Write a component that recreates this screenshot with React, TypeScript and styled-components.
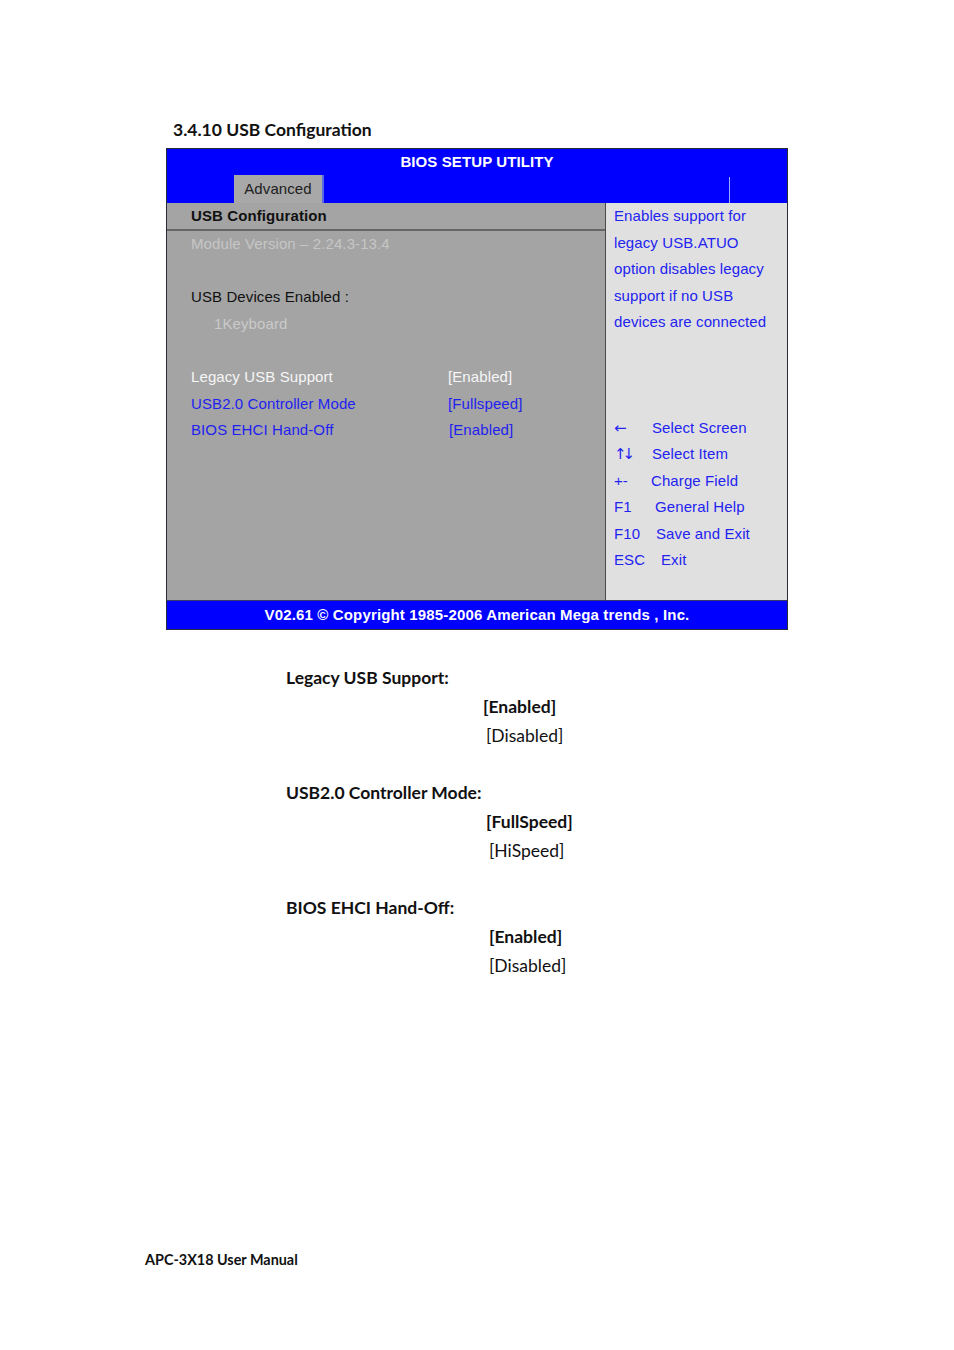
import React from "react";
import styled, { createGlobalStyle } from "styled-components";

const GlobalStyle = createGlobalStyle`
  body {
    margin: 0;
    background: #ffffff;
  }
`;

const Page = styled.div`
  width: 954px;
  height: 1350px;
  box-sizing: border-box;
  padding-top: 119px;
  font-family: Lato, "Open Sans", sans-serif;
  color: #111;
  display: flex;
  flex-direction: column;
`;

const SectionTitle = styled.h3`
  margin: 0 0 8px 173px;
  font-size: 17.5px;
  line-height: 21px;
  font-weight: 700;
`;

const Bios = styled.div`
  margin-left: 166px;
  width: 622px;
  box-sizing: border-box;
  border: 1px solid #2a2a3a;
  font-family: "Liberation Sans", Arial, sans-serif;
  font-size: 15px;
  letter-spacing: 0.1px;
`;

const Header = styled.div`
  background: #0000ff;
  height: 54px;
  display: flex;
  flex-direction: column;
`;

const HeaderTitle = styled.div`
  height: 26px;
  line-height: 26px;
  text-align: center;
  color: #ffffff;
  font-weight: 700;
  font-size: 15px;
  letter-spacing: 0.1px;
`;

const TabRow = styled.div`
  height: 28px;
  display: flex;
  align-items: stretch;
  padding-left: 67px;
`;

const Tab = styled.div`
  width: 88px;
  background: #a8a8a8;
  color: #202020;
  text-align: center;
  line-height: 28px;
  border-right: 2px solid #5a6ae0;
`;

const TabSpacer = styled.div`
  width: 405px;
`;

const TabDivider = styled.div`
  width: 1px;
  background: #9fa8ff;
  margin-top: 2px;
`;

const Body = styled.div`
  display: grid;
  grid-template-columns: 438px 1px 1fr;
  height: 397px;
`;

const LeftPanel = styled.div`
  background: #a4a4a4;
`;

const Divider = styled.div`
  background: #4a4a4a;
`;

const RightPanel = styled.div`
  background: #e0e0e0;
  padding-left: 8px;
  color: #2323f0;
`;

const PanelHeading = styled.div`
  height: 26px;
  line-height: 26px;
  padding-left: 24px;
  font-weight: 700;
  color: #111;
  border-bottom: 2px solid #666666;
`;

const ItemRow = styled.div<{ $tone?: string; $indent?: number }>`
  display: grid;
  grid-template-columns: 257px 1fr;
  height: 26.6px;
  line-height: 26.6px;
  padding-left: ${(p) => 24 + (p.$indent ?? 0)}px;
  color: ${(p) => p.$tone ?? "#111"};
  white-space: nowrap;
`;

const HelpLine = styled.div`
  height: 26.6px;
  line-height: 26.6px;
  white-space: nowrap;
`;

const KeyList = styled.div`
  margin-top: 79px;
`;

const KeyRow = styled.div<{ $keyWidth: number }>`
  display: grid;
  grid-template-columns: ${(p) => p.$keyWidth}px 1fr;
  height: 26.4px;
  line-height: 26.4px;
  white-space: nowrap;
`;

const KeyGlyph = styled.span<{ $arrow?: boolean }>`
  font-family: ${(p) => (p.$arrow ? '"DejaVu Sans", sans-serif' : "inherit")};
  font-size: ${(p) => (p.$arrow ? "15px" : "inherit")};
  letter-spacing: ${(p) => (p.$arrow ? "-4px" : "inherit")};
`;

const Footer = styled.div`
  background: #0000ff;
  height: 28px;
  line-height: 28px;
  border-top: 1px solid #3a3a6a;
  text-align: center;
  color: #ffffff;
  font-weight: 700;
  font-size: 15px;
  letter-spacing: 0.15px;
`;

const Options = styled.div`
  margin-top: 33px;
  padding-left: 286px;
  display: flex;
  flex-direction: column;
  gap: 28px;
`;

const OptionGroup = styled.div`
  display: flex;
  flex-direction: column;
`;

const OptionName = styled.div`
  font-size: 17.5px;
  font-weight: 700;
  line-height: 29px;
`;

const OptionValue = styled.div<{ $bold?: boolean; $offset: number }>`
  font-size: 17.5px;
  line-height: 29px;
  font-weight: ${(p) => (p.$bold ? 700 : 400)};
  padding-left: ${(p) => p.$offset}px;
`;

const PageFooter = styled.div`
  margin-top: auto;
  margin-bottom: 80px;
  padding-left: 145px;
  font-size: 14.4px;
  font-weight: 700;
  line-height: 20px;
`;

const items = [
  { label: "Module Version – 2.24.3-13.4", tone: "#c6c6c6" },
  { label: "" },
  { label: "USB Devices Enabled :", tone: "#111" },
  { label: "1Keyboard", tone: "#cacaca", indent: 23 },
  { label: "" },
  { label: "Legacy USB Support", value: "[Enabled]", tone: "#f6f6f6" },
  { label: "USB2.0 Controller Mode", value: "[Fullspeed]", tone: "#1f1ff0" },
  { label: "BIOS EHCI Hand-Off", value: "[Enabled]", tone: "#1f1ff0", valueShift: 1 },
];

const help = [
  "Enables support for",
  "legacy USB.ATUO",
  "option disables legacy",
  "support if no USB",
  "devices are connected",
];

const keys = [
  { key: "←", desc: "Select Screen", width: 38, arrow: true },
  { key: "↑↓", desc: "Select Item", width: 38, arrow: true },
  { key: "+-", desc: "Charge Field", width: 37 },
  { key: "F1", desc: "General Help", width: 41 },
  { key: "F10", desc: "Save and Exit", width: 42 },
  { key: "ESC", desc: "Exit", width: 47 },
];

const options = [
  { name: "Legacy USB Support:", values: [["[Enabled]", 197], ["[Disabled]", 200]] },
  { name: "USB2.0 Controller Mode:", values: [["[FullSpeed]", 200], ["[HiSpeed]", 203]] },
  { name: "BIOS EHCI Hand-Off:", values: [["[Enabled]", 203], ["[Disabled]", 203]] },
] as const;

export default function App() {
  return (
    <>
      <GlobalStyle />
      <Page>
        <SectionTitle>3.4.10 USB Configuration</SectionTitle>
        <Bios>
          <Header>
            <HeaderTitle>BIOS SETUP UTILITY</HeaderTitle>
            <TabRow>
              <Tab>Advanced</Tab>
              <TabSpacer />
              <TabDivider />
            </TabRow>
          </Header>
          <Body>
            <LeftPanel>
              <PanelHeading>USB Configuration</PanelHeading>
              {items.map((it, i) => (
                <ItemRow key={i} $tone={it.tone} $indent={it.indent}>
                  <span>{it.label}</span>
                  {it.value && (
                    <span style={it.valueShift ? { paddingLeft: it.valueShift } : undefined}>
                      {it.value}
                    </span>
                  )}
                </ItemRow>
              ))}
            </LeftPanel>
            <Divider />
            <RightPanel>
              {help.map((line) => (
                <HelpLine key={line}>{line}</HelpLine>
              ))}
              <KeyList>
                {keys.map((k) => (
                  <KeyRow key={k.key} $keyWidth={k.width}>
                    <KeyGlyph $arrow={k.arrow}>{k.key}</KeyGlyph>
                    <span>{k.desc}</span>
                  </KeyRow>
                ))}
              </KeyList>
            </RightPanel>
          </Body>
          <Footer>V02.61 © Copyright 1985-2006 American Mega trends , Inc.</Footer>
        </Bios>

        <Options>
          {options.map((o) => (
            <OptionGroup key={o.name}>
              <OptionName>{o.name}</OptionName>
              {o.values.map(([v, off], i) => (
                <OptionValue key={v} $bold={i === 0} $offset={off}>
                  {v}
                </OptionValue>
              ))}
            </OptionGroup>
          ))}
        </Options>

        <PageFooter>APC-3X18 User Manual</PageFooter>
      </Page>
    </>
  );
}
